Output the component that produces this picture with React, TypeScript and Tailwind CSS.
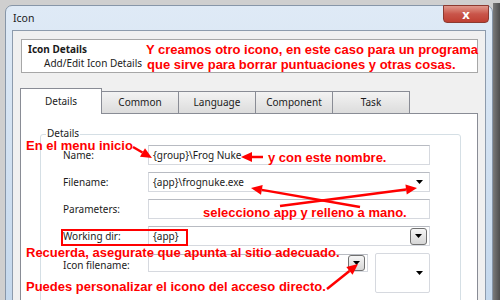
import React from "react";

const red =
  "absolute whitespace-nowrap font-['Liberation_Sans',Arial,sans-serif] font-bold text-[13px] leading-[11px] text-[#ff0000]";

function Tri() {
  return (
    <svg width="7" height="4" viewBox="0 0 7 4">
      <path d="M0 0h7L3.5 4z" fill="#000" />
    </svg>
  );
}

function DropButton({ className = "" }: { className?: string }) {
  return (
    <div
      className={`flex items-center justify-center rounded-[3px] border border-[#707070] bg-gradient-to-b from-[#f6f6f6] to-[#d6d6d6] ${className}`}
    >
      <Tri />
    </div>
  );
}

function Field({ children, className = "" }: { children?: React.ReactNode; className?: string }) {
  return (
    <div
      className={`flex items-center border border-[#d6d9df] border-t-[#b8bbc2] bg-white pl-[4px] ${className}`}
    >
      {children}
    </div>
  );
}

function Arrow({ x1, y1, x2, y2 }: { x1: number; y1: number; x2: number; y2: number }) {
  const a = Math.atan2(y2 - y1, x2 - x1);
  const len = 11;
  const w = 5;
  const bx = x2 - len * Math.cos(a);
  const by = y2 - len * Math.sin(a);
  const px = -Math.sin(a) * w;
  const py = Math.cos(a) * w;
  return (
    <g>
      <line x1={x1} y1={y1} x2={bx} y2={by} stroke="#ff0000" strokeWidth="2.5" />
      <polygon
        points={`${x2},${y2} ${bx + px},${by + py} ${bx - px},${by - py}`}
        fill="#ff0000"
      />
    </g>
  );
}

const tabs = ["Common", "Language", "Component", "Task"];

export default function App() {
  return (
    <div className="relative flex h-[300px] w-[500px] overflow-hidden bg-[#cfcfcf] font-['Noto_Sans',sans-serif] text-[10px] text-[#1b1b1b]">
      {/* window */}
      <div className="ml-[5px] mt-[5px] flex h-[310px] w-[488px] flex-col rounded-t-[7px] border border-[#8796a8] bg-gradient-to-b from-[#dfeaf6] to-[#c3d7ec]">
        <div className="flex h-[26px] items-start justify-between">
          <span className="pl-[7px] pt-[5px] text-[10.5px]">Icon</span>
          <div className="mr-[3px] -mt-px flex h-[18px] w-[46px] items-center justify-center rounded-b-[4px] border border-[#8c3a30] bg-gradient-to-b from-[#e0988c] via-[#c9554a] to-[#bf3f32] text-[13px] font-bold leading-none text-white">
            x
          </div>
        </div>
        <div className="flex-1 px-[6px]">
          <div className="h-full border border-[#8d9bac] bg-[#f0f0f0]">
            {/* header */}
            <div className="ml-[8px] mt-[8px] flex h-[34px] w-[457px] flex-col border border-[#a7a7a7] bg-white pl-[6px] pt-[2px]">
              <span className="font-bold leading-[14px]">Icon Details</span>
              <span className="pl-[16px] leading-[14px]">Add/Edit Icon Details</span>
            </div>
            {/* tabs */}
            <div className="ml-[7px] mt-[15px] flex h-[25px] items-end">
              <div className="relative z-10 -mb-px flex h-[26px] w-[82px] items-start justify-center border border-b-0 border-[#898c95] bg-white pt-[5px]">
                Details
              </div>
              {tabs.map((t) => (
                <div
                  key={t}
                  className="-ml-px flex h-[22px] w-[78px] items-center justify-center border border-b-0 border-[#898c95] bg-gradient-to-b from-[#f3f3f3] to-[#dcdcdc]"
                >
                  {t}
                </div>
              ))}
            </div>
            {/* panel */}
            <div className="ml-[7px] h-[200px] w-[458px] border border-[#898c95] bg-white">
              <div className="relative ml-[19px] mt-[20px] h-[170px] w-[421px] rounded-[3px] border border-[#d5dfe5] pl-[22px] pt-[10px]">
                <span className="absolute -top-[7px] left-[5px] bg-white px-[1px] leading-[11px]">
                  Details
                </span>
                <div className="flex flex-col gap-[7px] leading-[12px]">
                  <div className="flex items-center">
                    <span className="w-[85px]">Name:</span>
                    <Field className="h-[20px] w-[282px]">{"{group}\\Frog Nuke"}</Field>
                  </div>
                  <div className="flex items-center">
                    <span className="w-[85px]">Filename:</span>
                    <Field className="h-[20px] w-[282px] justify-between pr-[6px]">
                      <span>{"{app}\\frognuke.exe"}</span>
                      <Tri />
                    </Field>
                  </div>
                  <div className="flex items-center">
                    <span className="w-[85px]">Parameters:</span>
                    <Field className="h-[20px] w-[282px]" />
                  </div>
                  <div className="flex items-center">
                    <span className="w-[85px]">Working dir:</span>
                    <Field className="h-[20px] w-[282px] justify-between pr-[2px]">
                      <span>{"{app}"}</span>
                      <DropButton className="h-[17px] w-[17px]" />
                    </Field>
                  </div>
                  <div className="flex items-start">
                    <span className="mt-[6px] w-[85px]">Icon filename:</span>
                    <Field className="mt-[1px] h-[18px] w-[220px] justify-end pr-[2px]">
                      <DropButton className="h-[16px] w-[17px]" />
                    </Field>
                    <div className="ml-[7px] flex h-[40px] w-[55px] items-center justify-end rounded-[2px] border border-[#d6d9df] bg-white pr-[6px]">
                      <Tri />
                    </div>
                  </div>
                </div>
              </div>
            </div>
          </div>
        </div>
      </div>
      <div className="mt-[3px] w-[7px] bg-gradient-to-r from-[#7a7a7a] to-[#4e4e4e]" />

      {/* annotations */}
      <svg className="absolute left-0 top-0" width="500" height="300">
        <Arrow x1={133} y1={147} x2={152} y2={158} />
        <Arrow x1={263} y1={157} x2={241} y2={157} />
        <Arrow x1={360} y1={207} x2={251} y2={188} />
        <Arrow x1={280} y1={206} x2={417} y2={188} />
        <Arrow x1={327} y1={289} x2={358} y2={264} />
      </svg>
      <div className="absolute left-[61px] top-[229px] h-[17px] w-[127px] border-2 border-[#ff0000]" />
      <span className={`${red} left-[146px] top-[44px]`}>
        Y creamos otro icono, en este caso para un programa
      </span>
      <span className={`${red} left-[147px] top-[59px]`}>
        que sirve para borrar puntuaciones y otras cosas.
      </span>
      <span className={`${red} left-[26px] top-[140px]`}>En el menu inicio</span>
      <span className={`${red} left-[268px] top-[152px]`}>y con este nombre.</span>
      <span className={`${red} left-[203px] top-[207px]`}>selecciono app y relleno a mano.</span>
      <span className={`${red} left-[26px] top-[247px]`}>
        Recuerda, asegurate que apunta al sitio adecuado.
      </span>
      <span className={`${red} left-[26px] top-[281px]`}>
        Puedes personalizar el icono del acceso directo.
      </span>
    </div>
  );
}
